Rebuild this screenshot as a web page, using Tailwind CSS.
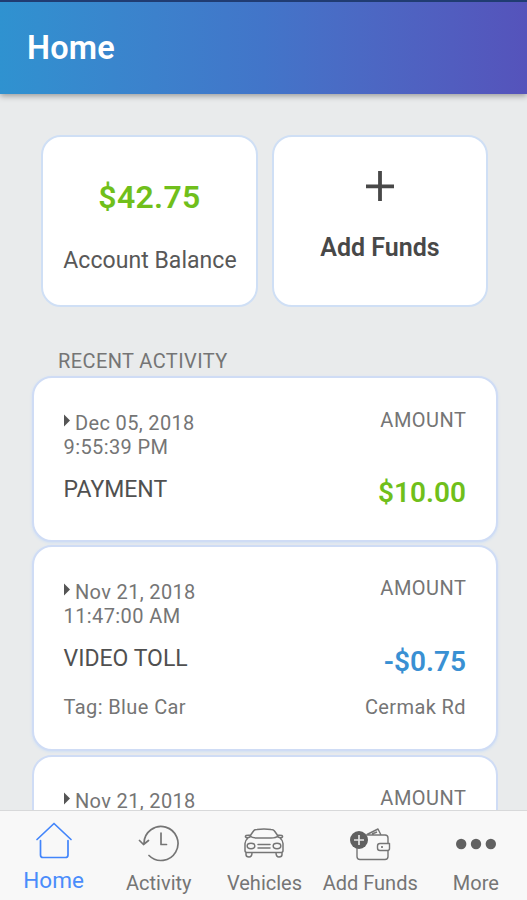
<!DOCTYPE html>
<html lang="en">
<head>
<meta charset="utf-8">
<title>Home</title>
<script src="https://cdn.jsdelivr.net/npm/@tailwindcss/browser@4"></script>
</head>
<body class="h-[900px] w-[527px] overflow-hidden bg-[#e9ebec] font-[Roboto,sans-serif] text-[#757575]">
<div class="flex h-full flex-col">
  <header class="relative z-10 flex h-[94px] shrink-0 items-center border-t-2 border-[#203c72] bg-linear-to-r from-[#2f92d0] via-[#4275c9] to-[#5553bb] bg-origin-border pl-[27px] pt-[1px] shadow-[0_2px_6px_rgba(0,0,0,0.35)]">
    <h1 class="text-[32.500px] leading-none font-semibold tracking-[0.2px] text-white">Home</h1>
  </header>

  <main class="min-h-0 flex-1 overflow-hidden">
    <section class="flex gap-[14px] pl-[41px] pt-[41px]">
      <div class="flex h-[172px] w-[217px] flex-col items-center rounded-[20px] border-2 border-[#cfdff5] bg-white pt-[42px]">
        <div class="text-[32px] leading-[36px] font-semibold tracking-[0.3px] text-[#70bf1b]">$42.75</div>
        <div class="mt-[32px] pl-[1px] text-[23px] leading-[28px] tracking-[0.05px] whitespace-nowrap text-[#585858]">Account Balance</div>
      </div>
      <div class="flex h-[172px] w-[216px] flex-col items-center rounded-[20px] border-2 border-[#cfdff5] bg-white pt-[34px]">
        <svg class="h-[30px] w-[28px]" viewBox="0 0 28 30" fill="none" stroke="#484848" stroke-width="3.800"><path d="M14 0V30M0 15.300H28"/></svg>
        <div class="mt-[33px] text-[25px] leading-[28px] font-semibold text-[#484848]">Add Funds</div>
      </div>
    </section>

    <h2 class="mt-[42px] pl-[58px] text-[20px] leading-[24px] tracking-[0.4px]">RECENT ACTIVITY</h2>

    <section class="mx-[32px] mt-[3px] w-[466px]">
      <article class="flex h-[166px] justify-between rounded-[20px] border-2 border-[#cfdcf5] bg-white px-[30px] pt-[33px] shadow-[0_1px_3px_#cfe0f5]">
        <div>
          <div class="flex items-center text-[20px] leading-[24px] tracking-[0.35px]"><svg class="mr-[4px] mb-[5px] h-[13px] w-[7px]" viewBox="0 0 7 13"><path d="M0 0.500L6 6.500L0 12.500Z" fill="#555"/></svg>Dec 05, 2018</div>
          <div class="-ml-[0.500px] text-[20px] leading-[25px] tracking-[0.4px]">9:55:39 PM</div>
          <div class="mt-[16px] -ml-[0.500px] text-[23px] leading-[28px] text-[#505050]">PAYMENT</div>
        </div>
        <div class="-mt-[3px] text-right">
          <div class="-mr-[0.500px] text-[20px] leading-[24px] tracking-[0.5px]">AMOUNT</div>
          <div class="mt-[45px] text-[28px] leading-[32px] font-semibold text-[#70bf1b]">$10.00</div>
        </div>
      </article>

      <article class="mt-[3px] flex h-[206px] justify-between rounded-[20px] border-2 border-[#cfdcf5] bg-white px-[30px] pt-[33px] shadow-[0_1px_3px_#cfe0f5]">
        <div>
          <div class="flex items-center text-[20px] leading-[24px] tracking-[0.35px]"><svg class="mr-[4px] mb-[5px] h-[13px] w-[7px]" viewBox="0 0 7 13"><path d="M0 0.500L6 6.500L0 12.500Z" fill="#555"/></svg>Nov 21, 2018</div>
          <div class="-ml-[0.500px] text-[20px] leading-[25px] tracking-[0.4px]">11:47:00 AM</div>
          <div class="mt-[16px] -ml-[0.500px] text-[23px] leading-[28px] text-[#505050]">VIDEO TOLL</div>
          <div class="mt-[22px] -ml-[0.500px] text-[20px] leading-[24px] tracking-[0.4px]">Tag: Blue Car</div>
        </div>
        <div class="-mt-[4px] text-right">
          <div class="-mr-[0.500px] text-[20px] leading-[24px] tracking-[0.5px]">AMOUNT</div>
          <div class="mt-[46px] text-[28px] leading-[32px] font-semibold text-[#3990d3]">-$0.75</div>
          <div class="mt-[17px] text-[20px] leading-[24px] tracking-[0.4px]">Cermak Rd</div>
        </div>
      </article>

      <article class="mt-[4px] flex h-[206px] justify-between rounded-[20px] border-2 border-[#cfdcf5] bg-white px-[30px] pt-[32px]">
        <div>
          <div class="flex items-center text-[20px] leading-[24px] tracking-[0.35px]"><svg class="mr-[4px] mb-[5px] h-[13px] w-[7px]" viewBox="0 0 7 13"><path d="M0 0.500L6 6.500L0 12.500Z" fill="#555"/></svg>Nov 21, 2018</div>
        </div>
        <div class="-mt-[3px] text-right">
          <div class="-mr-[0.500px] text-[20px] leading-[24px] tracking-[0.5px]">AMOUNT</div>
        </div>
      </article>
    </section>
  </main>

  <nav class="grid h-[90px] shrink-0 grid-cols-5 border-t border-[#d8d9da] bg-[#f8f8f8] pl-[1px] text-center text-[20px] leading-[24px]">
    <a class="flex flex-col items-center pt-[10px] text-[#4a8cfb]">
      <svg class="h-[40px] w-[40px]" viewBox="0 0 40 40" fill="none" stroke="#4285fb" stroke-width="1.700" stroke-linejoin="round" stroke-linecap="round"><path d="M3 18.500L20 2.500L37 18.500M6.500 19.500V34Q6.500 36.500 9 36.500H31.500Q34 36.500 34 34V19.500"/></svg>
      <span class="mt-[7px] text-[22.500px]">Home</span>
    </a>
    <a class="flex flex-col items-center pt-[12px]">
      <svg class="h-[40px] w-[42px]" viewBox="0 0 42 40" fill="none" stroke="#757575" stroke-width="1.700" stroke-linecap="round" stroke-linejoin="round"><path d="M6 20A17 17 0 1 1 11 32.500M1.500 17.500L5.500 21.500L10.500 17.500M23 10V21.500H28.500"/></svg>
      <span class="mt-[8px]">Activity</span>
    </a>
    <a class="flex flex-col items-center pt-[12px] pl-[1px]">
      <svg class="h-[40px] w-[42px]" viewBox="0 0 42 40" fill="none" stroke="#757575" stroke-width="1.500" stroke-linecap="round" stroke-linejoin="round"><path d="M7 13L10.500 8Q11.500 6.500 14 6.500Q21 5.500 28 6.500Q30.500 6.500 31.500 8L35 13M7 13Q9 15 14 15H28Q33 15 35 13M8 12L3 12.500Q1.500 14 4 15L7 14M34 12L39 12.500Q40.500 14 38 15L35 14M5 15Q2 17.500 2 20.500V27.500Q2 29.500 4 29.500H38Q40 29.500 40 27.500V20.500Q40 17.500 37 15M3 29.500V31.500Q3 34 6 34Q9 34 9 29.500M39 29.500V31.500Q39 34 36 34Q33 34 33 29.500M15 21.500H27M15 25H27"/><ellipse cx="8" cy="23" rx="3.800" ry="2.700"/><ellipse cx="34" cy="23" rx="3.800" ry="2.700"/></svg>
      <span class="mt-[8px]">Vehicles</span>
    </a>
    <a class="flex flex-col items-center pt-[12px] pl-[2px]">
      <svg class="h-[40px] w-[42px]" viewBox="0 0 42 40" fill="none" stroke="#757575" stroke-width="1.400" stroke-linejoin="round"><path d="M8 20V33.500Q8 36.500 11 36.500H36Q39 36.500 39 33.500V15Q39 12 36 12H17M18 11.500L29 6L32 12M23 11L28 9"/><path d="M40.500 20.500H31Q28.500 20.500 28.500 23V25Q28.500 27.500 31 27.500H38.500Q40.500 27.500 40.500 25.500Z" fill="#f8f8f8"/><circle cx="33" cy="24" r="1" fill="#666" stroke="none"/><circle cx="10" cy="17" r="9" fill="#606060" stroke="none"/><path d="M10 12V22M5 17H15" stroke="#e6e6e6" stroke-width="1.700"/></svg>
      <span class="mt-[8px] whitespace-nowrap">Add Funds</span>
    </a>
    <a class="flex flex-col items-center pt-[12px] pl-[3px]">
      <svg class="h-[40px] w-[42px]" viewBox="0 0 42 40" fill="#616161"><circle cx="6.200" cy="21" r="5.200"/><circle cx="21" cy="21" r="5.200"/><circle cx="35.800" cy="21" r="5.200"/></svg>
      <span class="mt-[8px]">More</span>
    </a>
  </nav>
</div>
</body>
</html>
